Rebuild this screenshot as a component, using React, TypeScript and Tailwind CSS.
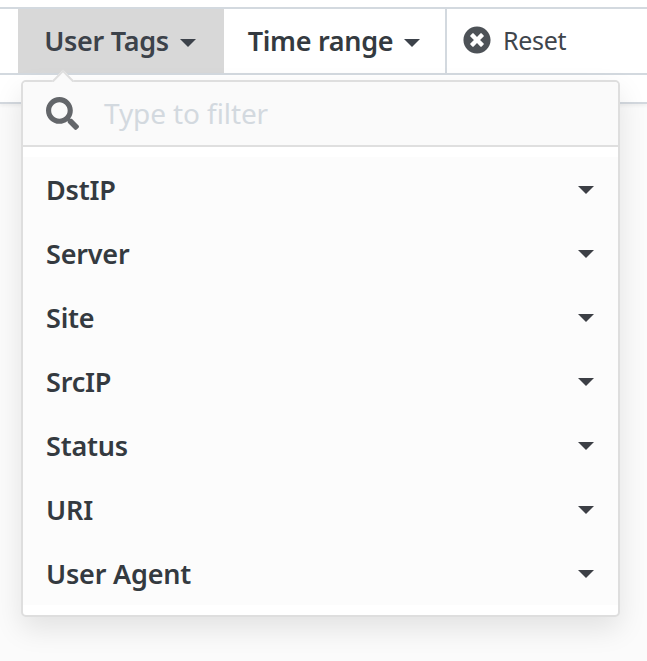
import React from 'react';
import { FaSearch, FaTimesCircle } from 'react-icons/fa';

const tags = ['DstIP', 'Server', 'Site', 'SrcIP', 'Status', 'URI', 'User Agent'];

const Caret: React.FC<{ className?: string }> = ({ className }) => (
  <svg width="16" height="8" viewBox="0 0 16 8" className={className}>
    <path d="M0 0 H16 L8 8 Z" fill="currentColor" />
  </svg>
);

const App: React.FC = () => {
  return (
    <div className="relative h-[661px] w-[647px] overflow-hidden bg-[#fbfbfb] font-['Noto_Sans','Open_Sans',sans-serif] text-[#343a40]">
      {/* Toolbar */}
      <div className="h-[104px] border-b-2 border-[#d3d8de] bg-white pt-[7px] shadow-[0_2px_3px_rgba(0,0,0,0.05)]">
        <div className="flex h-[68px] border-y-2 border-[#d3d9df]">
          <div className="w-[18px]" />
          <div className="flex w-[206px] items-center justify-center gap-[11px] bg-[#d8d8d8] pt-[1px] pr-[2px] text-[27px] font-semibold tracking-[-0.3px] text-[#3c424a]">
            User Tags
            <Caret className="mt-[2px] text-[#3c424a]" />
          </div>
          <div className="flex w-[223px] items-center justify-center gap-[11px] border-r-2 border-[#d3d9df] pt-[1px] pr-[1px] text-[27px] font-semibold tracking-[-0.3px]">
            Time range
            <Caret className="mt-[2px] text-[#3c424a]" />
          </div>
          <div className="flex items-center gap-[12px] pl-[16px] text-[25px] tracking-[-0.3px] text-[#3f454c]">
            <FaTimesCircle className="-mt-[2px] h-[28px] w-[28px] text-[#4d5257]" />
            Reset
          </div>
        </div>
      </div>

      {/* Dropdown */}
      <div className="absolute top-[80px] left-[21px] w-[599px] rounded-[5px] border-2 border-[#dedede] bg-white shadow-[0_12px_28px_rgba(0,0,0,0.1)]">
        <div className="absolute -top-[9px] left-[32px] h-[16px] w-[16px] rotate-45 border-t-2 border-l-2 border-[#dedede] bg-[#fafafa]" />
        <div className="relative flex h-[65px] items-center gap-[25px] rounded-t-[4px] border-b-2 border-[#dfdfdf] bg-[#fafafa] pl-[23px]">
          <FaSearch className="h-[33px] w-[33px] text-[#63666a]" />
          <span className="pb-[2px] text-[28px] tracking-[-0.1px] text-[#d3d9df]">Type to filter</span>
        </div>
        <div className="mt-[10px] mb-[10px] bg-[#fcfcfc]">
          {tags.map((tag) => (
            <div key={tag} className="flex h-[64px] items-center justify-between pr-[24px] pl-[23px] text-[27px] font-semibold tracking-[-0.2px]">
              <span className="pt-[3px]">{tag}</span>
              <Caret className="mt-[2px] text-[#3c3f45]" />
            </div>
          ))}
        </div>
      </div>
    </div>
  );
};

export default App;
